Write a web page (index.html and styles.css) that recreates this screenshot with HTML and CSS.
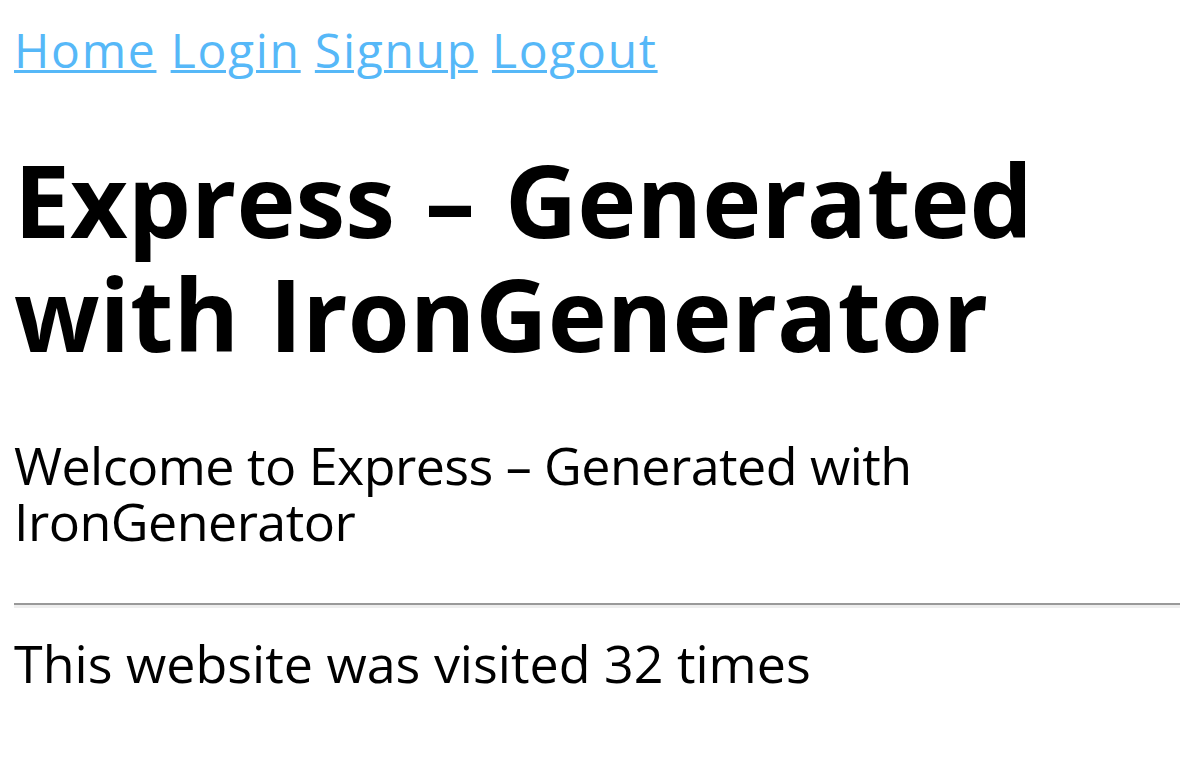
FILE: index.html
```html
<!DOCTYPE html>
<html>
<head>
<meta charset="utf-8">
<title>Express – Generated with IronGenerator</title>
<link rel="stylesheet" href="styles.css">
</head>
<body class="page">
<nav class="nav"><a class="nav-link" href="#">Home</a> <a class="nav-link" href="#">Login</a> <a class="nav-link" href="#">Signup</a> <a class="nav-link" href="#">Logout</a></nav>
<h1 class="title">Express – Generated with IronGenerator</h1>
<p class="welcome">Welcome to Express – Generated with IronGenerator</p>
<hr class="rule">
<p class="visits">This website was visited 32 times</p>
</body>
</html>
```
FILE: styles.css
```css
html { background: #fff; }
.page {
  margin: 0;
  padding: 22px 22px 0 14px;
  font-family: "Open Sans", "Lucida Grande", Verdana, sans-serif;
  color: #000;
}
.nav {
  font-size: 48px;
  line-height: 56px;
  letter-spacing: 1.7px;
}
.nav-link {
  color: #56b8f8;
  text-decoration: underline;
  text-decoration-thickness: 3px;
}
.title {
  margin: 64px 0 0;
  font-size: 100px;
  line-height: 114px;
  font-weight: bold;
  word-spacing: 4px;
}
.welcome {
  margin: 67px 0 0;
  font-size: 52px;
  line-height: 56px;
  letter-spacing: -0.55px;
}
.rule {
  margin: 54px 0 0;
  border: 0;
  border-top: 2px solid #999;
  border-bottom: 3px solid #eee;
  height: 0;
}
.visits {
  margin: 27px 0 0;
  font-size: 52px;
  line-height: 56px;
}
```
